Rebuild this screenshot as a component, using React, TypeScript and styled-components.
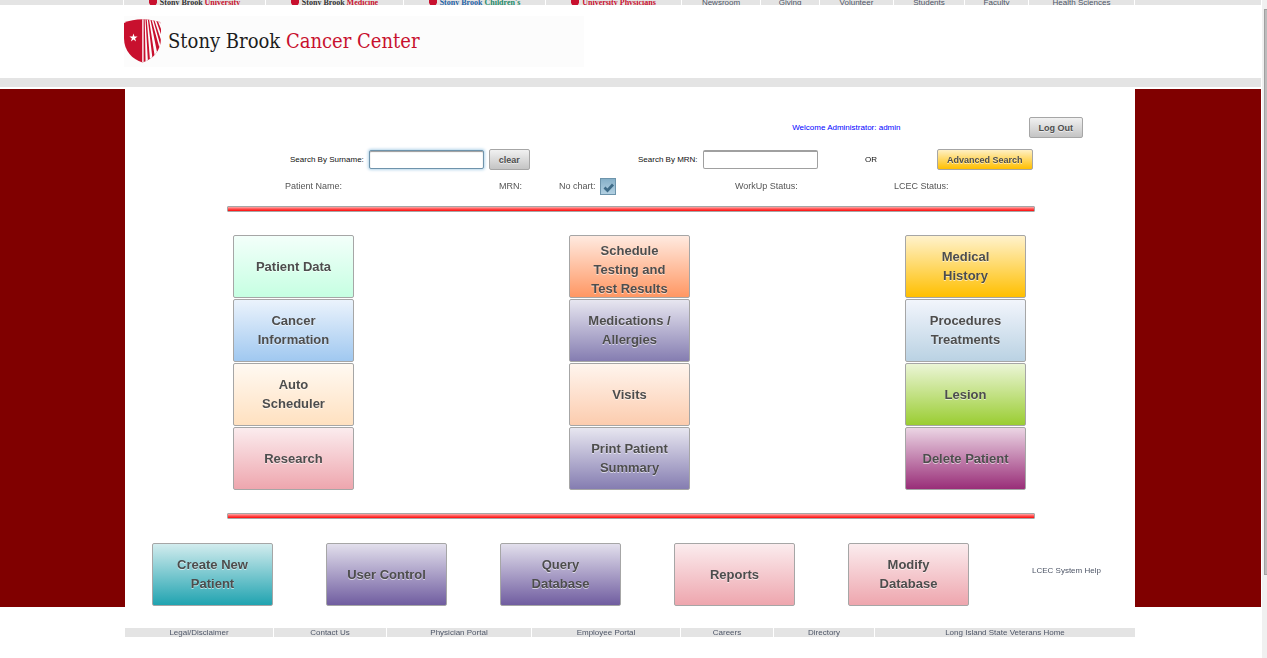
import React from "react";
import styled, { createGlobalStyle, css } from "styled-components";

const sans = '"Liberation Sans", Arial, sans-serif';
const serif = '"Liberation Serif", "Times New Roman", serif';
const slab = '"DejaVu Serif Condensed", "DejaVu Serif", serif';
const grey = "#e4e4e4";
const maroon = "#800000";
const crimson = "#c8102e";

const GlobalStyle = createGlobalStyle`
  * { box-sizing: border-box; }
  body {
    margin: 0;
    background: #fff;
    color: #111;
    font: 8px/10px ${sans};
  }
`;

const Shell = styled.div`
  display: flex;
  min-height: 100vh;
`;

const Page = styled.div`
  flex: 1;
  min-width: 0;
  margin-right: 1px;
`;

const ScrollTrack = styled.div`
  width: 5px;
  padding: 9px 0 0 2px;
  background: #f0f0f0;
`;

const ScrollThumb = styled.div`
  height: 86vh;
  border: 1px solid #a0a0a0;
  border-right: 0;
  background: #bcbcbc;
`;

const StripLink = styled.a`
  display: flex;
  justify-content: center;
  align-items: center;
  gap: 3px;
  height: 9px;
  line-height: 9px;
  background: ${grey};
  color: #4d5566;
  text-decoration: none;
  white-space: nowrap;
`;

const LinkStrip = styled.nav<{ $columns: string; $cropped?: boolean }>`
  display: grid;
  grid-template-columns: ${(p) => p.$columns};
  column-gap: 1px;
  align-items: end;
  height: ${(p) => (p.$cropped ? 5 : 9)}px;
  overflow: hidden;

  ${StripLink} {
    padding-bottom: ${(p) => (p.$cropped ? 4 : 0)}px;
  }
`;

const StripFill = styled.span`
  height: 9px;
  background: ${grey};
`;

const BrandName = styled.span<{ $color: string }>`
  color: ${(p) => p.$color};
  font-family: ${serif};
  font-weight: bold;
`;

const Columns = styled.div<{ $rail?: boolean }>`
  display: grid;
  grid-template-columns: 125fr minmax(0, 1010px) 126fr;
  ${(p) => p.$rail && css`background: ${maroon};`}
`;

const Header = styled.header`
  display: grid;
  grid-template-columns: 124fr minmax(0, 1011px) 126fr;
  padding: 11px 0;
`;

const Logo = styled.a`
  grid-column: 2;
  display: flex;
  align-items: center;
  gap: 7px;
  width: 460px;
  height: 51px;
  padding-bottom: 2px;
  background: #fcfcfc;
  color: #1d1d1d;
  font: 20px/28px ${slab};
  text-decoration: none;
  white-space: nowrap;
`;

const LogoAccent = styled.span`
  color: ${crimson};
`;

const Divider = styled.div`
  height: 9px;
  margin-bottom: 2px;
  background: ${grey};
`;

const Main = styled.main`
  grid-column: 2;
  padding: 28px 0 1px;
  background: #fff;
`;

const WelcomeRow = styled.div`
  display: flex;
  justify-content: flex-end;
  align-items: center;
  gap: 128px;
  padding-right: 52px;
  color: #0000ff;
`;

const SearchRow = styled.form`
  display: grid;
  grid-template-columns: 348fr 227fr 72fr 198fr;
  align-items: center;
  margin-top: 11px;
  padding-left: 165px;
`;

const Field = styled.div<{ $gap?: number }>`
  display: flex;
  align-items: center;
  gap: ${(p) => p.$gap ?? 5}px;
  white-space: nowrap;
`;

const TextInput = styled.input`
  width: 115px;
  height: 19px;
  padding: 0 4px;
  border: 1px solid #a0a0a0;
  border-top-width: 2px;
  border-radius: 2px;
  background: #fff;
  color: #222;
  font: 9px/14px ${sans};
  outline: none;

  &:focus {
    border: 1px solid #6f93ab;
    box-shadow: 0 0 3px 1px #b5d5ea, inset 0 1px 1px #999;
  }
`;

const SmallButton = styled.button<{ $from?: string; $to?: string }>`
  height: 21px;
  padding: 0 9px;
  border: 1px solid #a6a6a6;
  border-radius: 2px;
  background: linear-gradient(${(p) => p.$from ?? "#f1f1f1"}, ${(p) => p.$to ?? "#c4c4c4"});
  color: #4d4d4d;
  font: bold 9px/12px ${sans};
  text-shadow: 0 1px 0 rgba(255, 255, 255, 0.6);
  white-space: nowrap;
`;

const StatusRow = styled.div`
  display: grid;
  grid-template-columns: 214fr 60fr 176fr 159fr 241fr;
  height: 17px;
  margin-top: 8px;
  padding-left: 160px;
  color: #555;
  font-size: 9px;
  line-height: 16px;
  white-space: nowrap;

  label {
    height: 17px;
  }
`;

const CheckWrap = styled.span`
  position: relative;
  display: flex;
`;

const CheckInput = styled.input`
  appearance: none;
  width: 16px;
  height: 17px;
  margin: 0;
  border: 1px solid #6d94ab;
  background: linear-gradient(#86b0c8, #b2d0e2);
`;

const CheckMark = styled.svg`
  position: absolute;
  inset: 0;
  pointer-events: none;
`;

const RedRule = styled.hr`
  height: 6px;
  margin: 11px 100px 23px 102px;
  border: 1px solid #a6a6a6;
  border-radius: 1px;
  background: linear-gradient(#ffa8a8, #ff5050 50%, #ff0a0a);
`;

const TileColumns = styled.div`
  display: flex;
  justify-content: space-between;
  margin: 0 109px 23px 108px;
`;

const TileColumn = styled.div`
  display: grid;
  gap: 1px;
`;

const BottomRow = styled.div`
  display: grid;
  grid-template-columns: repeat(5, 174fr) 113fr;
  align-items: center;
  margin-top: 24px;
  padding-left: 27px;
`;

const Tile = styled.button<{ $from: string; $to: string }>`
  display: flex;
  justify-content: center;
  align-items: safe center;
  width: 121px;
  height: 63px;
  padding: 5px 12px 6px;
  border: 1px solid #a6a6a6;
  border-radius: 2px;
  background: linear-gradient(${(p) => p.$from}, ${(p) => p.$to});
  color: #4d4d4d;
  font: bold 13px/19px ${sans};
  text-align: center;
  text-shadow: 0 1px 0 rgba(255, 255, 255, 0.6);
`;

const HelpLink = styled.a`
  margin: -8px 0 0 10px;
  color: #4d5566;
  text-decoration: none;
  white-space: nowrap;
`;

const Footer = styled.footer`
  grid-column: 2;
  margin-top: 21px;
`;

const brands = [
  { lead: "Stony Brook", leadColor: "#333", tail: " University", tailColor: crimson },
  { lead: "Stony Brook", leadColor: "#333", tail: " Medicine", tailColor: crimson },
  { lead: "Stony Brook", leadColor: "#1f62a5", tail: " Children's", tailColor: "#1d8a68" },
  { lead: "University", leadColor: crimson, tail: " Physicians", tailColor: crimson },
];

const topLinks = ["Newsroom", "Giving", "Volunteer", "Students", "Faculty", "Health Sciences"];

const footerLinks = [
  "Legal/Disclaimer",
  "Contact Us",
  "Physician Portal",
  "Employee Portal",
  "Careers",
  "Directory",
  "Long Island State Veterans Home",
];

type TileData = [label: string, from: string, to: string];

const tileColumns: TileData[][] = [
  [
    ["Patient Data", "#f3fffa", "#c6ffe2"],
    ["Cancer Information", "#ebf3fc", "#a0c8f0"],
    ["Auto Scheduler", "#fff9f2", "#ffe1c0"],
    ["Research", "#fbecee", "#eea6ae"],
  ],
  [
    ["Schedule Testing and Test Results", "#ffeae0", "#ff9763"],
    ["Medications / Allergies", "#e7e6f0", "#857db1"],
    ["Visits", "#fff5ee", "#fcccae"],
    ["Print Patient Summary", "#e7e6f0", "#857db1"],
  ],
  [
    ["Medical History", "#fff2cc", "#ffbf00"],
    ["Procedures Treatments", "#f2f5fc", "#bad2e3"],
    ["Lesion", "#ebf5d6", "#9acd32"],
    ["Delete Patient", "#ebd5e4", "#992e78"],
  ],
];

const bottomTiles: TileData[] = [
  ["Create New Patient", "#d2ecee", "#20a3b0"],
  ["User Control", "#e2dfec", "#705da0"],
  ["Query Database", "#e2dfec", "#705da0"],
  ["Reports", "#fbecee", "#eea6ae"],
  ["Modify Database", "#fbecee", "#eea6ae"],
];

const shieldOutline = "M0 4 C10 -1 27 -1 37 4 V19 C37 32 29 40 18.500 43.500 C8 40 0 32 0 19 Z";

const Shield = () => (
  <svg width="37" height="44" viewBox="0 0 37 44" aria-hidden="true">
    <clipPath id="shield">
      <path d={shieldOutline} />
    </clipPath>
    <g clipPath="url(#shield)">
      <rect width="37" height="44" fill={crimson} />
      <path
        d="M18.200 0 h1.400 V44 h-1.400z M20.700 0 h.8 L24 44 h-2.400z M22.700 0 h1.100 L29 44 h-2.800z M25 0 h1.300 L34 38 h-3.200z M27.400 0 h1.500 L38 32 v6z M30 0 h1.600 L39 21 v6z M33 0 h1.700 L39 9 v6z"
        fill="#fcfcfc"
      />
      <path
        d="M9.500 14.500 l1 3 h3.100 l-2.500 1.900 1 3 -2.600 -1.800 -2.600 1.800 1 -3 -2.500 -1.900 h3.100z"
        fill="#fff"
      />
    </g>
  </svg>
);

const MiniShield = () => (
  <svg width="8" height="9" viewBox="0 0 8 9" aria-hidden="true">
    <path d="M0 1 Q4 -1 8 1 V4.500 Q7.500 7.500 4 8.800 Q0.500 7.500 0 4.500 Z" fill={crimson} />
  </svg>
);

export default function App() {
  return (
    <>
      <GlobalStyle />
      <Shell>
        <Page>
          <LinkStrip
            aria-label="Stony Brook sites"
            $cropped
            $columns="123fr 141fr 137fr 141fr 135fr 78fr 58fr 73fr 70fr 63fr 105fr 126fr"
          >
            <StripFill />
            {brands.map((b) => (
              <StripLink href="#" key={b.lead + b.tail}>
                <MiniShield />
                <span>
                  <BrandName $color={b.leadColor}>{b.lead}</BrandName>
                  <BrandName $color={b.tailColor}>{b.tail}</BrandName>
                </span>
              </StripLink>
            ))}
            {topLinks.map((t) => (
              <StripLink href="#" key={t}>{t}</StripLink>
            ))}
            <StripFill />
          </LinkStrip>

          <Header>
            <Logo href="#">
              <Shield />
              <span>
                Stony Brook <LogoAccent>Cancer Center</LogoAccent>
              </span>
            </Logo>
          </Header>
          <Divider />

          <Columns $rail>
            <Main>
              <WelcomeRow>
                <span>Welcome Administrator: admin</span>
                <SmallButton type="button">Log Out</SmallButton>
              </WelcomeRow>

              <SearchRow onSubmit={(e) => e.preventDefault()}>
                <Field>
                  <label htmlFor="surname">Search By Surname:</label>
                  <TextInput id="surname" type="text" autoFocus />
                  <SmallButton type="reset">clear</SmallButton>
                </Field>
                <Field>
                  <label htmlFor="mrn">Search By MRN:</label>
                  <TextInput id="mrn" type="text" />
                </Field>
                <span>OR</span>
                <Field>
                  <SmallButton type="button" $from="#fff0c4" $to="#ffbf00">
                    Advanced Search
                  </SmallButton>
                </Field>
              </SearchRow>

              <StatusRow>
                <span>Patient Name:</span>
                <span>MRN:</span>
                <Field $gap={4}>
                  <label htmlFor="nochart">No chart:</label>
                  <CheckWrap>
                    <CheckInput id="nochart" type="checkbox" defaultChecked />
                    <CheckMark width="16" height="17" viewBox="0 0 16 17" aria-hidden="true">
                      <path d="M4.500 9.500 L7.500 12.500 L13 6.500" fill="none" stroke="#3f6c88" strokeWidth="2.800" />
                    </CheckMark>
                  </CheckWrap>
                </Field>
                <span>WorkUp Status:</span>
                <span>LCEC Status:</span>
              </StatusRow>

              <RedRule />
              <TileColumns>
                {tileColumns.map((column) => (
                  <TileColumn key={column[0][0]}>
                    {column.map(([label, from, to]) => (
                      <Tile type="button" key={label} $from={from} $to={to}>{label}</Tile>
                    ))}
                  </TileColumn>
                ))}
              </TileColumns>
              <RedRule />

              <BottomRow>
                {bottomTiles.map(([label, from, to]) => (
                  <Tile type="button" key={label} $from={from} $to={to}>{label}</Tile>
                ))}
                <HelpLink href="#">LCEC System Help</HelpLink>
              </BottomRow>
            </Main>
          </Columns>

          <Columns>
            <Footer>
              <LinkStrip
                aria-label="Footer"
                $columns="148fr 112fr 144fr 148fr 92fr 100fr 260fr"
              >
                {footerLinks.map((t) => (
                  <StripLink href="#" key={t}>{t}</StripLink>
                ))}
              </LinkStrip>
            </Footer>
          </Columns>
        </Page>
        <ScrollTrack>
          <ScrollThumb />
        </ScrollTrack>
      </Shell>
    </>
  );
}
